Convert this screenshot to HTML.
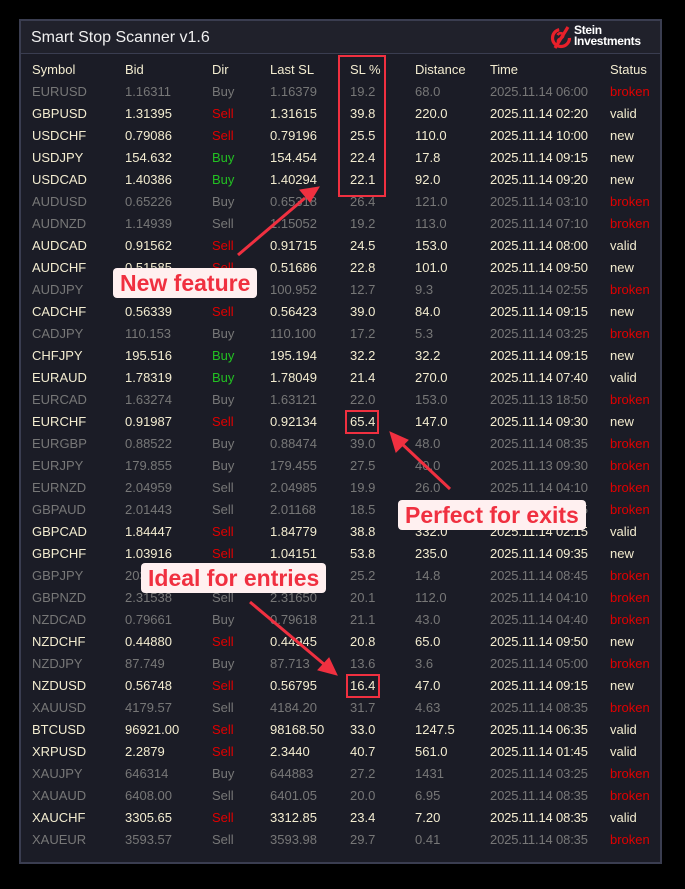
<!DOCTYPE html>
<html><head><meta charset="utf-8"><style>
*{margin:0;padding:0;box-sizing:border-box}
body{width:685px;height:889px;background:#000;position:relative;overflow:hidden;font-family:"Liberation Sans",sans-serif}
.panel{position:absolute;left:19px;top:19px;width:643px;height:845px;background:#1b1c26;border:2px solid #3a3d50}
.title{position:absolute;left:0;top:0;width:639px;height:33px;background:#20212b;border-bottom:1px solid #3a3d50}
.title .t{position:absolute;left:10px;top:8px;font-size:16px;color:#f0f0f0}
.r{position:absolute;left:0;height:22px;line-height:22px;font-size:13px;width:639px}
.r span{position:absolute;top:0;white-space:nowrap}
.c1{left:11px}.c2{left:104px}.c3{left:191px}.c4{left:249px}.c5{left:329px}.c6{left:394px}.c7{left:469px;letter-spacing:-0.15px}.c8{left:589px}
.b{color:#f3ecd0}.d{color:#777}
.s{color:#e00000!important}.g{color:#22c022!important}.x{color:#e00000!important}
.h{color:#f3ecd0}
.box{position:absolute;border:2px solid #f03040}
.lab{position:absolute;background:#fff0f0;border-radius:4px;color:#f03040;font-weight:bold;font-size:23px;line-height:30px;padding:0 7px;white-space:nowrap}
</style></head><body>
<div class="panel">
<div class="title"><div class="t">Smart Stop Scanner v1.6</div>
<svg style="position:absolute;left:529px;top:4px" width="24" height="26" viewBox="0 0 24 26"><circle cx="11" cy="13" r="8.5" fill="none" stroke="#e8202a" stroke-width="3.2" stroke-dasharray="38 15"/><path d="M5 23 L18 2" stroke="#e8202a" stroke-width="3.2"/><path d="M7.5 10 C9.5 7 14.5 8 13 11.5 C11.5 14.5 7.5 13 8 17" fill="none" stroke="#e8202a" stroke-width="2.6"/></svg>
<div style="position:absolute;left:553px;top:4px;color:#fff;font-weight:bold;font-size:12px;line-height:11px;letter-spacing:-0.3px">Stein<br>Investments</div>
</div>
<div class="r h" style="top:38px"><span class="c1">Symbol</span><span class="c2">Bid</span><span class="c3">Dir</span><span class="c4">Last SL</span><span class="c5">SL %</span><span class="c6">Distance</span><span class="c7">Time</span><span class="c8">Status</span></div>
<div class="r d" style="top:60px"><span class="c1">EURUSD</span><span class="c2">1.16311</span><span class="c3">Buy</span><span class="c4">1.16379</span><span class="c5">19.2</span><span class="c6">68.0</span><span class="c7">2025.11.14 06:00</span><span class="c8 x">broken</span></div>
<div class="r b" style="top:82px"><span class="c1">GBPUSD</span><span class="c2">1.31395</span><span class="c3 s">Sell</span><span class="c4">1.31615</span><span class="c5">39.8</span><span class="c6">220.0</span><span class="c7">2025.11.14 02:20</span><span class="c8">valid</span></div>
<div class="r b" style="top:104px"><span class="c1">USDCHF</span><span class="c2">0.79086</span><span class="c3 s">Sell</span><span class="c4">0.79196</span><span class="c5">25.5</span><span class="c6">110.0</span><span class="c7">2025.11.14 10:00</span><span class="c8">new</span></div>
<div class="r b" style="top:126px"><span class="c1">USDJPY</span><span class="c2">154.632</span><span class="c3 g">Buy</span><span class="c4">154.454</span><span class="c5">22.4</span><span class="c6">17.8</span><span class="c7">2025.11.14 09:15</span><span class="c8">new</span></div>
<div class="r b" style="top:148px"><span class="c1">USDCAD</span><span class="c2">1.40386</span><span class="c3 g">Buy</span><span class="c4">1.40294</span><span class="c5">22.1</span><span class="c6">92.0</span><span class="c7">2025.11.14 09:20</span><span class="c8">new</span></div>
<div class="r d" style="top:170px"><span class="c1">AUDUSD</span><span class="c2">0.65226</span><span class="c3">Buy</span><span class="c4">0.65318</span><span class="c5">26.4</span><span class="c6">121.0</span><span class="c7">2025.11.14 03:10</span><span class="c8 x">broken</span></div>
<div class="r d" style="top:192px"><span class="c1">AUDNZD</span><span class="c2">1.14939</span><span class="c3">Sell</span><span class="c4">1.15052</span><span class="c5">19.2</span><span class="c6">113.0</span><span class="c7">2025.11.14 07:10</span><span class="c8 x">broken</span></div>
<div class="r b" style="top:214px"><span class="c1">AUDCAD</span><span class="c2">0.91562</span><span class="c3 s">Sell</span><span class="c4">0.91715</span><span class="c5">24.5</span><span class="c6">153.0</span><span class="c7">2025.11.14 08:00</span><span class="c8">valid</span></div>
<div class="r b" style="top:236px"><span class="c1">AUDCHF</span><span class="c2">0.51585</span><span class="c3 s">Sell</span><span class="c4">0.51686</span><span class="c5">22.8</span><span class="c6">101.0</span><span class="c7">2025.11.14 09:50</span><span class="c8">new</span></div>
<div class="r d" style="top:258px"><span class="c1">AUDJPY</span><span class="c2">101.038</span><span class="c3">Buy</span><span class="c4">100.952</span><span class="c5">12.7</span><span class="c6">9.3</span><span class="c7">2025.11.14 02:55</span><span class="c8 x">broken</span></div>
<div class="r b" style="top:280px"><span class="c1">CADCHF</span><span class="c2">0.56339</span><span class="c3 s">Sell</span><span class="c4">0.56423</span><span class="c5">39.0</span><span class="c6">84.0</span><span class="c7">2025.11.14 09:15</span><span class="c8">new</span></div>
<div class="r d" style="top:302px"><span class="c1">CADJPY</span><span class="c2">110.153</span><span class="c3">Buy</span><span class="c4">110.100</span><span class="c5">17.2</span><span class="c6">5.3</span><span class="c7">2025.11.14 03:25</span><span class="c8 x">broken</span></div>
<div class="r b" style="top:324px"><span class="c1">CHFJPY</span><span class="c2">195.516</span><span class="c3 g">Buy</span><span class="c4">195.194</span><span class="c5">32.2</span><span class="c6">32.2</span><span class="c7">2025.11.14 09:15</span><span class="c8">new</span></div>
<div class="r b" style="top:346px"><span class="c1">EURAUD</span><span class="c2">1.78319</span><span class="c3 g">Buy</span><span class="c4">1.78049</span><span class="c5">21.4</span><span class="c6">270.0</span><span class="c7">2025.11.14 07:40</span><span class="c8">valid</span></div>
<div class="r d" style="top:368px"><span class="c1">EURCAD</span><span class="c2">1.63274</span><span class="c3">Buy</span><span class="c4">1.63121</span><span class="c5">22.0</span><span class="c6">153.0</span><span class="c7">2025.11.13 18:50</span><span class="c8 x">broken</span></div>
<div class="r b" style="top:390px"><span class="c1">EURCHF</span><span class="c2">0.91987</span><span class="c3 s">Sell</span><span class="c4">0.92134</span><span class="c5">65.4</span><span class="c6">147.0</span><span class="c7">2025.11.14 09:30</span><span class="c8">new</span></div>
<div class="r d" style="top:412px"><span class="c1">EURGBP</span><span class="c2">0.88522</span><span class="c3">Buy</span><span class="c4">0.88474</span><span class="c5">39.0</span><span class="c6">48.0</span><span class="c7">2025.11.14 08:35</span><span class="c8 x">broken</span></div>
<div class="r d" style="top:434px"><span class="c1">EURJPY</span><span class="c2">179.855</span><span class="c3">Buy</span><span class="c4">179.455</span><span class="c5">27.5</span><span class="c6">40.0</span><span class="c7">2025.11.13 09:30</span><span class="c8 x">broken</span></div>
<div class="r d" style="top:456px"><span class="c1">EURNZD</span><span class="c2">2.04959</span><span class="c3">Sell</span><span class="c4">2.04985</span><span class="c5">19.9</span><span class="c6">26.0</span><span class="c7">2025.11.14 04:10</span><span class="c8 x">broken</span></div>
<div class="r d" style="top:478px"><span class="c1">GBPAUD</span><span class="c2">2.01443</span><span class="c3">Sell</span><span class="c4">2.01168</span><span class="c5">18.5</span><span class="c6">27.5</span><span class="c7">2025.11.14 03:15</span><span class="c8 x">broken</span></div>
<div class="r b" style="top:500px"><span class="c1">GBPCAD</span><span class="c2">1.84447</span><span class="c3 s">Sell</span><span class="c4">1.84779</span><span class="c5">38.8</span><span class="c6">332.0</span><span class="c7">2025.11.14 02:15</span><span class="c8">valid</span></div>
<div class="r b" style="top:522px"><span class="c1">GBPCHF</span><span class="c2">1.03916</span><span class="c3 s">Sell</span><span class="c4">1.04151</span><span class="c5">53.8</span><span class="c6">235.0</span><span class="c7">2025.11.14 09:35</span><span class="c8">new</span></div>
<div class="r d" style="top:544px"><span class="c1">GBPJPY</span><span class="c2">203.718</span><span class="c3">Sell</span><span class="c4">203.866</span><span class="c5">25.2</span><span class="c6">14.8</span><span class="c7">2025.11.14 08:45</span><span class="c8 x">broken</span></div>
<div class="r d" style="top:566px"><span class="c1">GBPNZD</span><span class="c2">2.31538</span><span class="c3">Sell</span><span class="c4">2.31650</span><span class="c5">20.1</span><span class="c6">112.0</span><span class="c7">2025.11.14 04:10</span><span class="c8 x">broken</span></div>
<div class="r d" style="top:588px"><span class="c1">NZDCAD</span><span class="c2">0.79661</span><span class="c3">Buy</span><span class="c4">0.79618</span><span class="c5">21.1</span><span class="c6">43.0</span><span class="c7">2025.11.14 04:40</span><span class="c8 x">broken</span></div>
<div class="r b" style="top:610px"><span class="c1">NZDCHF</span><span class="c2">0.44880</span><span class="c3 s">Sell</span><span class="c4">0.44945</span><span class="c5">20.8</span><span class="c6">65.0</span><span class="c7">2025.11.14 09:50</span><span class="c8">new</span></div>
<div class="r d" style="top:632px"><span class="c1">NZDJPY</span><span class="c2">87.749</span><span class="c3">Buy</span><span class="c4">87.713</span><span class="c5">13.6</span><span class="c6">3.6</span><span class="c7">2025.11.14 05:00</span><span class="c8 x">broken</span></div>
<div class="r b" style="top:654px"><span class="c1">NZDUSD</span><span class="c2">0.56748</span><span class="c3 s">Sell</span><span class="c4">0.56795</span><span class="c5">16.4</span><span class="c6">47.0</span><span class="c7">2025.11.14 09:15</span><span class="c8">new</span></div>
<div class="r d" style="top:676px"><span class="c1">XAUUSD</span><span class="c2">4179.57</span><span class="c3">Sell</span><span class="c4">4184.20</span><span class="c5">31.7</span><span class="c6">4.63</span><span class="c7">2025.11.14 08:35</span><span class="c8 x">broken</span></div>
<div class="r b" style="top:698px"><span class="c1">BTCUSD</span><span class="c2">96921.00</span><span class="c3 s">Sell</span><span class="c4">98168.50</span><span class="c5">33.0</span><span class="c6">1247.5</span><span class="c7">2025.11.14 06:35</span><span class="c8">valid</span></div>
<div class="r b" style="top:720px"><span class="c1">XRPUSD</span><span class="c2">2.2879</span><span class="c3 s">Sell</span><span class="c4">2.3440</span><span class="c5">40.7</span><span class="c6">561.0</span><span class="c7">2025.11.14 01:45</span><span class="c8">valid</span></div>
<div class="r d" style="top:742px"><span class="c1">XAUJPY</span><span class="c2">646314</span><span class="c3">Buy</span><span class="c4">644883</span><span class="c5">27.2</span><span class="c6">1431</span><span class="c7">2025.11.14 03:25</span><span class="c8 x">broken</span></div>
<div class="r d" style="top:764px"><span class="c1">XAUAUD</span><span class="c2">6408.00</span><span class="c3">Sell</span><span class="c4">6401.05</span><span class="c5">20.0</span><span class="c6">6.95</span><span class="c7">2025.11.14 08:35</span><span class="c8 x">broken</span></div>
<div class="r b" style="top:786px"><span class="c1">XAUCHF</span><span class="c2">3305.65</span><span class="c3 s">Sell</span><span class="c4">3312.85</span><span class="c5">23.4</span><span class="c6">7.20</span><span class="c7">2025.11.14 08:35</span><span class="c8">valid</span></div>
<div class="r d" style="top:808px"><span class="c1">XAUEUR</span><span class="c2">3593.57</span><span class="c3">Sell</span><span class="c4">3593.98</span><span class="c5">29.7</span><span class="c6">0.41</span><span class="c7">2025.11.14 08:35</span><span class="c8 x">broken</span></div>
</div>
<div class="box" style="left:338px;top:55px;width:48px;height:142px"></div>
<div class="box" style="left:345px;top:410px;width:34px;height:24px"></div>
<div class="box" style="left:346px;top:674px;width:34px;height:24px"></div>
<svg style="position:absolute;left:0;top:0" width="685" height="889">
<g stroke="#f03040" stroke-width="3" fill="#f03040">
<line x1="238" y1="255" x2="305" y2="198"/><polygon points="319,187 300,190 310,202" stroke-width="1"/>
<line x1="450" y1="489" x2="400" y2="442"/><polygon points="390,432 396,452 408,440" stroke-width="1"/>
<line x1="250" y1="602" x2="325" y2="665"/><polygon points="337,675 318,670 329,658" stroke-width="1"/>
</g></svg>
<div class="lab" style="left:113px;top:268px">New feature</div>
<div class="lab" style="left:398px;top:500px">Perfect for exits</div>
<div class="lab" style="left:141px;top:563px">Ideal for entries</div>
</body></html>
